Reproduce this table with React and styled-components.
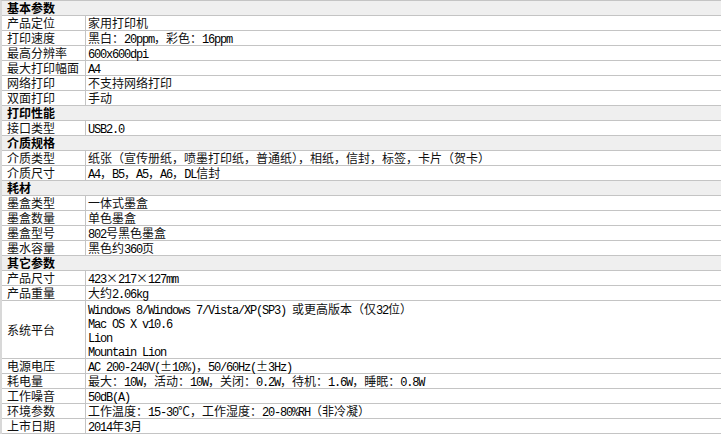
import React from "react";
import styled, { createGlobalStyle } from "styled-components";

const Global = createGlobalStyle`
  html, body { margin: 0; padding: 0; background: #ffffff; }
  body { font-family: "Noto Sans CJK SC", "Noto Sans", sans-serif; color: #111111; }
`;

const Sheet = styled.div`
  width: 721px;
  box-sizing: border-box;
  border-left: 2px solid #d8d8d8;
  border-top: 1px solid #c4c4c4;
  font-size: 12px;
  line-height: 14px;
`;

const SectionRow = styled.div`
  height: 14px;
  line-height: 14px;
  background: #efefef;
  border-bottom: 1px solid #c4c4c4;
  padding-left: 5px;
  font-weight: 700;
  color: #000;
  white-space: nowrap;
`;

const Row = styled.div`
  display: grid;
  grid-template-columns: 84px 1fr;
  height: ${(p) => p.$lines * 14 + (p.$lines > 1 ? 1 : 0)}px;
  border-bottom: 1px solid #c4c4c4;
  background: #ffffff;
`;

const Label = styled.div`
  display: flex;
  align-items: center;
  padding-left: 5px;
  border-right: 1px solid #c4c4c4;
  white-space: nowrap;
  color: #111;
`;

const Value = styled.div`
  display: flex;
  flex-direction: column;
  justify-content: center;
  padding-left: 2px;
  white-space: nowrap;
`;

const Line = styled.div`
  height: 14px;
  line-height: 14px;
  white-space: nowrap;
`;

const Latin = styled.span`
  font-family: "Liberation Mono", "DejaVu Sans Mono", monospace;
  font-size: 12px;
  letter-spacing: -1.2px;
  line-height: 14px;
  color: #000;
`;

const Wide = styled.span`
  display: inline-block;
  width: 12px;
  text-align: center;
  line-height: 14px;
`;

function Mixed({ text }) {
  const parts = [];
  let buf = "";
  let mode = null;
  const flush = (key) => {
    if (!buf) return;
    if (mode === "latin") parts.push(<Latin key={key}>{buf}</Latin>);
    else parts.push(<React.Fragment key={key}>{buf}</React.Fragment>);
    buf = "";
  };
  [...text].forEach((ch, i) => {
    const code = ch.charCodeAt(0);
    if (ch === "×" || ch === "±") {
      flush("b" + i);
      mode = null;
      parts.push(<Wide key={"w" + i}>{ch}</Wide>);
      return;
    }
    const m = code >= 0x20 && code <= 0x7e ? "latin" : "cjk";
    if (m !== mode) {
      flush("b" + i);
      mode = m;
    }
    buf += ch;
  });
  flush("end");
  return <>{parts}</>;
}

const data = [
  { section: "基本参数" },
  ["产品定位", "家用打印机"],
  ["打印速度", "黑白：20ppm，彩色：16ppm"],
  ["最高分辨率", "600x600dpi"],
  ["最大打印幅面", "A4"],
  ["网络打印", "不支持网络打印"],
  ["双面打印", "手动"],
  { section: "打印性能" },
  ["接口类型", "USB2.0"],
  { section: "介质规格" },
  ["介质类型", "纸张（宣传册纸，喷墨打印纸，普通纸），相纸，信封，标签，卡片（贺卡）"],
  ["介质尺寸", "A4，B5，A5，A6，DL信封"],
  { section: "耗材" },
  ["墨盒类型", "一体式墨盒"],
  ["墨盒数量", "单色墨盒"],
  ["墨盒型号", "802号黑色墨盒"],
  ["墨水容量", "黑色约360页"],
  { section: "其它参数" },
  ["产品尺寸", "423×217×127mm"],
  ["产品重量", "大约2.06kg"],
  [
    "系统平台",
    [
      "Windows 8/Windows 7/Vista/XP(SP3) 或更高版本（仅32位）",
      "Mac OS X v10.6",
      "Lion",
      "Mountain Lion",
    ],
  ],
  ["电源电压", "AC 200-240V(±10%)，50/60Hz(±3Hz)"],
  ["耗电量", "最大：10W，活动：10W，关闭：0.2W，待机：1.6W，睡眠：0.8W"],
  ["工作噪音", "50dB(A)"],
  ["环境参数", "工作温度：15-30℃，工作湿度：20-80%RH（非冷凝）"],
  ["上市日期", "2014年3月"],
];

export default function App() {
  return (
    <>
      <Global />
      <Sheet>
        {data.map((item, i) => {
          if (!Array.isArray(item)) {
            return <SectionRow key={i}>{item.section}</SectionRow>;
          }
          const [label, value] = item;
          const lines = Array.isArray(value) ? value : [value];
          return (
            <Row key={i} $lines={lines.length}>
              <Label>{label}</Label>
              <Value>
                {lines.map((l, j) => (
                  <Line key={j}>
                    <Mixed text={l} />
                  </Line>
                ))}
              </Value>
            </Row>
          );
        })}
      </Sheet>
    </>
  );
}
